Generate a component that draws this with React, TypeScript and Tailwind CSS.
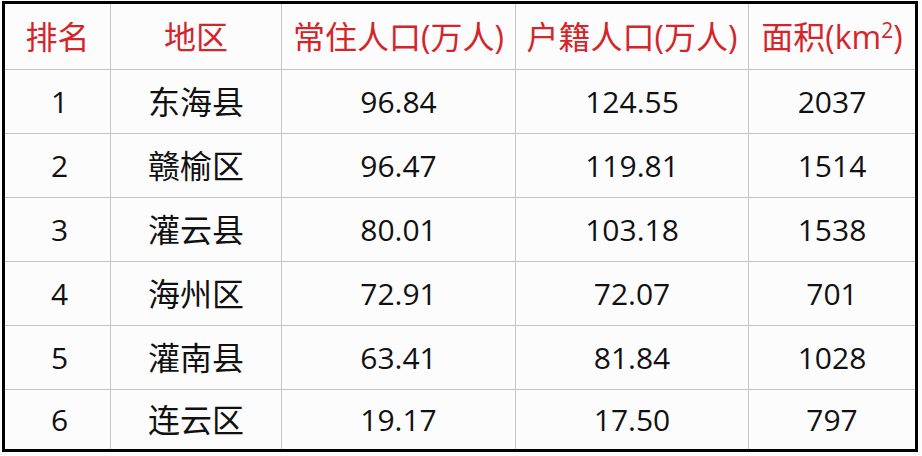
import React from 'react';

const headers = ['排名', '地区', '常住人口(万人)', '户籍人口(万人)', '面积(km²)'];

const rows = [
  ['1', '东海县', '96.84', '124.55', '2037'],
  ['2', '赣榆区', '96.47', '119.81', '1514'],
  ['3', '灌云县', '80.01', '103.18', '1538'],
  ['4', '海州区', '72.91', '72.07', '701'],
  ['5', '灌南县', '63.41', '81.84', '1028'],
  ['6', '连云区', '19.17', '17.50', '797'],
];

const widths = ['w-[106px]', 'w-[171px]', 'w-[234px]', 'w-[233px]', 'w-[166px]'];

const App = () => {
  return (
    <div
      className="w-[922px] h-[456px] bg-[#fdfcfd] pt-px pl-[2px]"
      style={{ fontFamily: '"Open Sans", "Noto Sans CJK SC", sans-serif' }}
    >
      <div className="w-[916px] border-[3px] border-black bg-[#fdfcfd] flex flex-col">
        <div className="flex h-[66px] border-b border-[#c4c4c4]">
          {headers.map((h, i) => (
            <div
              key={h}
              className={`${widths[i]} flex items-center justify-center text-[32px] text-[#d4262a] ${i < 4 ? 'border-r border-[#c4c4c4]' : ''}`}
            >
              {h === '面积(km²)' ? (
                <span>
                  面积(km<span className="text-[21px] align-[11px]">2</span>)
                </span>
              ) : (
                h
              )}
            </div>
          ))}
        </div>
        {rows.map((r, ri) => (
          <div
            key={r[0]}
            className={`flex ${ri < rows.length - 1 ? 'h-[64px] border-b border-[#c4c4c4]' : 'h-[59px]'}`}
          >
            {r.map((c, i) => (
              <div
                key={i}
                className={`${widths[i]} flex items-center justify-center text-[#111111] ${i === 1 ? 'text-[32px]' : 'text-[30px]'} ${i === 0 ? 'pl-[4px]' : ''} ${i < 4 ? 'border-r border-[#c4c4c4]' : ''}`}
              >
                {c}
              </div>
            ))}
          </div>
        ))}
      </div>
    </div>
  );
};

export default App;
